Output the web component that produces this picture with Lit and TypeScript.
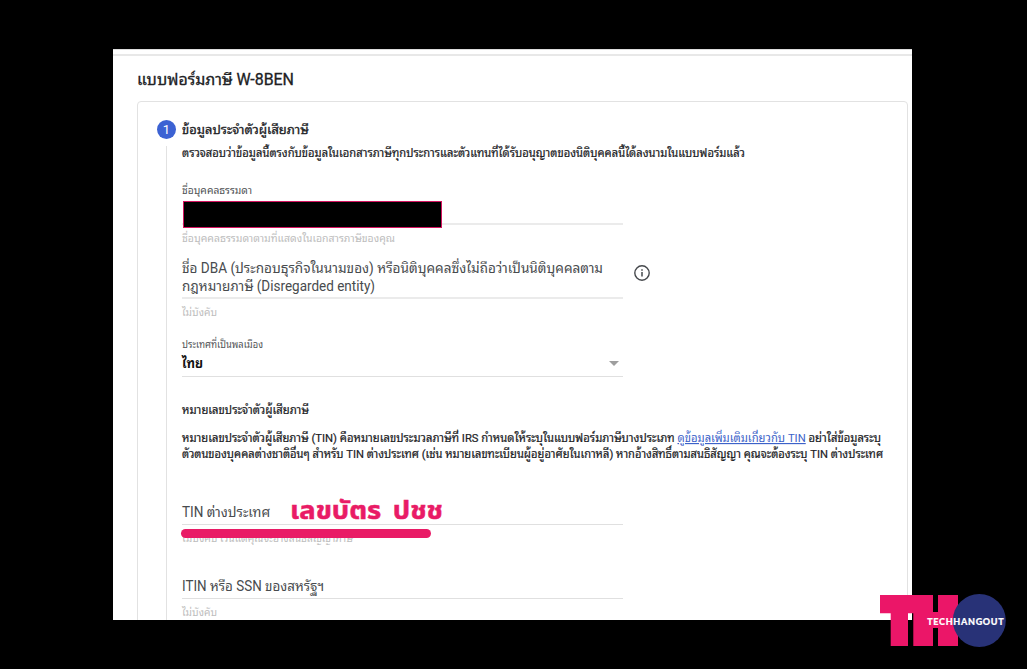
import { LitElement, html, css } from "lit";
import { customElement, property } from "lit/decorators.js";

@customElement("form-line")
export class FormLine extends LitElement {
  static styles = css`
    :host {
      display: block;
    }

    svg {
      display: block;
      overflow: visible;
    }

    text {
      fill: currentColor;
      white-space: pre;
    }

    .link {
      fill: #3c62c9;
      stroke: none;
      text-decoration: underline;
    }
  `;

  @property() text = "";
  @property() link = "";
  @property() after = "";
  @property({ type: Number }) width = 100;
  @property({ type: Number }) height = 18;

  render() {
    const base = this.height - 5;
    return html`
      <svg width=${this.width} height=${this.height}>
        <text x="0" y=${base} textLength=${this.width} lengthAdjust="spacingAndGlyphs">${this.text}<tspan class="link">${this.link}</tspan>${this.after}</text>
      </svg>
    `;
  }
}

@customElement("tech-logo")
export class TechLogo extends LitElement {
  static styles = css`
    :host {
      display: block;
      width: 127px;
      height: 54px;
    }

    svg {
      display: block;
    }

    text {
      font: 900 9px Lato, sans-serif;
      fill: #fff;
      stroke: #fff;
      stroke-width: 0.2px;
    }
  `;

  render() {
    return html`
      <svg width="127" height="54" viewBox="0 0 127 54">
        <path
          d="M0 2H53V19H58V2H78V53H58V35H53V53H33.3V20.3H28V53H10.7V20.3H0Z"
          fill="#eb1668"
        />
        <circle cx="99.3" cy="27.4" r="26.5" fill="#283277" />
        <text x="47.2" y="31.5" textLength="76.5">TECHHANGOUT</text>
      </svg>
    `;
  }
}

@customElement("app-root")
export class AppRoot extends LitElement {
  static styles = css`
    :host {
      display: block;
      position: relative;
      box-sizing: border-box;
      width: 1027px;
      height: 669px;
      padding: 49px 115px 49px 113px;
      background: #000;
      overflow: hidden;
      font-family: Roboto, "Noto Sans Thai Looped", "Noto Looped Thai", Loma, Waree, Garuda, "Noto Sans Thai", sans-serif;
      color: #202124;
    }

    .sheet {
      box-sizing: border-box;
      height: 571px;
      background: #fff;
      border-top: 1px solid #ddd;
      overflow: hidden;
    }

    .rule {
      height: 2px;
      margin-top: 4px;
      background: #e8e8e8;
    }

    .title {
      margin: 15px 0 0 24px;
      font-size: 16px;
      stroke: #202124;
      stroke-width: 0.3px;
    }

    .card {
      box-sizing: border-box;
      width: 771px;
      height: 540px;
      margin: 11px 0 0 24px;
      padding: 18px 0 0 19px;
      border: 1px solid #e2e2e2;
      border-radius: 4px;
    }

    .step {
      display: flex;
      align-items: center;
      gap: 6px;
      height: 19px;
    }

    .number {
      width: 19px;
      height: 19px;
      border-radius: 50%;
      background: #3c62d3;
      color: #fff;
      font-size: 13px;
      line-height: 19px;
      text-align: center;
    }

    .heading {
      font-size: 13px;
      stroke: #202124;
      stroke-width: 0.3px;
    }

    .body {
      display: flex;
      flex-direction: column;
      margin: 7px 0 0 9px;
      padding-left: 15px;
      height: 480px;
      border-left: 1px solid #e2e2e2;
    }

    .note {
      font-size: 11.5px;
      stroke: #202124;
      stroke-width: 0.2px;
    }

    .label {
      font-size: 10.5px;
      color: #505356;
    }

    .hint {
      font-size: 10.5px;
      color: #bdbdbd;
    }

    .placeholder {
      font-size: 13.8px;
      color: #484b4e;
    }

    .field {
      box-sizing: border-box;
      width: 441px;
      border-bottom: 1px solid #e0e0e0;
    }

    .name {
      height: 25px;
      margin-top: 1px;
      border-bottom-width: 2px;
      border-color: #ebebeb;
    }

    .redacted {
      box-sizing: border-box;
      width: 259px;
      height: 27px;
      margin: 1px 0 0 1px;
      position: relative;
      background: #000;
      border: 1px solid #d4145f;
    }

    .dba-row {
      display: flex;
      gap: 10px;
      margin-top: 13px;
      height: 39px;
    }

    .dba {
      height: 39px;
      border-bottom-width: 2px;
      border-color: #ebebeb;
    }

    .info {
      margin-top: 4px;
    }

    .country {
      display: flex;
      align-items: center;
      justify-content: space-between;
      height: 24px;
      padding-bottom: 2px;
    }

    .value {
      font-size: 13.4px;
      font-weight: 700;
      color: #111;
    }

    .arrow {
      margin-right: 4px;
      border: 5px solid transparent;
      border-top-color: #9e9e9e;
      border-bottom: 0;
    }

    .tin {
      display: flex;
      gap: 20px;
      height: 31px;
      margin-top: 31px;
    }

    .tin .placeholder {
      margin-top: 10px;
    }

    .answer {
      margin-top: 3px;
      font-family: "Noto Sans Thai", "Open Sans", sans-serif;
      font-size: 25px;
      font-weight: 700;
      word-spacing: 4px;
      color: #e91b66;
      stroke: #e91b66;
      stroke-width: 0.5px;
    }

    .marker {
      position: absolute;
      left: 181px;
      top: 529px;
      width: 250px;
      height: 9px;
      border-radius: 5px;
      background: #e91b66;
    }

    .logo {
      position: absolute;
      left: 880px;
      top: 593px;
    }

    .name-label {
      margin-top: 21px;
    }

    .below {
      margin-top: 6px;
    }

    .country-label {
      margin-top: 16px;
    }

    .tin-title {
      margin-top: 26px;
    }

    .tin-text {
      margin-top: 12px;
    }

    .itin {
      margin-top: 31px;
      padding-bottom: 2px;
    }
  `;

  render() {
    return html`
      <div class="sheet">
        <div class="rule"></div>
        <form-line class="title" text="แบบฟอร์มภาษี W-8BEN" width="157" height="19"></form-line>
        <div class="card">
          <div class="step">
            <div class="number">1</div>
            <form-line class="heading" text="ข้อมูลประจำตัวผู้เสียภาษี" width="127" height="18"></form-line>
          </div>
          <div class="body">
            <form-line
              class="note"
              text="ตรวจสอบว่าข้อมูลนี้ตรงกับข้อมูลในเอกสารภาษีทุกประการและตัวแทนที่ได้รับอนุญาตของนิติบุคคลนี้ได้ลงนามในแบบฟอร์มแล้ว"
              width="563"
              height="16"
            ></form-line>
            <form-line class="label name-label" text="ชื่อบุคคลธรรมดา" width="70" height="16"></form-line>
            <div class="field name"><div class="redacted"></div></div>
            <form-line class="hint below" text="ชื่อบุคคลธรรมดาตามที่แสดงในเอกสารภาษีของคุณ" width="213" height="16"></form-line>
            <div class="dba-row">
              <div class="field dba">
                <form-line class="placeholder" text="ชื่อ DBA (ประกอบธุรกิจในนามของ) หรือนิติบุคคลซึ่งไม่ถือว่าเป็นนิติบุคคลตาม" width="421" height="18"></form-line>
                <form-line class="placeholder" text="กฎหมายภาษี (Disregarded entity)" width="193" height="18"></form-line>
              </div>
              <svg class="info" width="18" height="18" viewBox="0 0 18 18">
                <circle cx="9" cy="9" r="7.2" fill="none" stroke="#46494d" stroke-width="1.4" />
                <path d="M9 8V12.5M9 5.2V6.7" stroke="#46494d" stroke-width="1.5" />
              </svg>
            </div>
            <form-line class="hint below" text="ไม่บังคับ" width="35" height="16"></form-line>
            <form-line class="label country-label" text="ประเทศที่เป็นพลเมือง" width="81" height="16"></form-line>
            <div class="field country">
              <form-line class="value" text="ไทย" width="21" height="18"></form-line>
              <div class="arrow"></div>
            </div>
            <form-line class="note tin-title" text="หมายเลขประจำตัวผู้เสียภาษี" width="127" height="16"></form-line>
            <form-line
              class="note tin-text"
              text="หมายเลขประจำตัวผู้เสียภาษี (TIN) คือหมายเลขประมวลภาษีที่ IRS กำหนดให้ระบุในแบบฟอร์มภาษีบางประเภท "
              link="ดูข้อมูลเพิ่มเติมเกี่ยวกับ TIN"
              after=" อย่าใส่ข้อมูลระบุ"
              width="699"
              height="16"
            ></form-line>
            <form-line
              class="note"
              text="ตัวตนของบุคคลต่างชาติอื่นๆ สำหรับ TIN ต่างประเทศ (เช่น หมายเลขทะเบียนผู้อยู่อาศัยในเกาหลี) หากอ้างสิทธิ์ตามสนธิสัญญา คุณจะต้องระบุ TIN ต่างประเทศ"
              width="701"
              height="16"
            ></form-line>
            <div class="field tin">
              <form-line class="placeholder" text="TIN ต่างประเทศ" width="88" height="18"></form-line>
              <form-line class="answer" text="เลขบัตร ปชช" width="153" height="27"></form-line>
            </div>
            <form-line class="hint below" text="ไม่บังคับ เว้นแต่คุณจะอ้างสนธิสัญญาภาษี" width="171" height="16"></form-line>
            <div class="field itin">
              <form-line class="placeholder" text="ITIN หรือ SSN ของสหรัฐฯ" width="142" height="18"></form-line>
            </div>
            <form-line class="hint below" text="ไม่บังคับ" width="35" height="16"></form-line>
          </div>
        </div>
      </div>
      <div class="marker"></div>
      <tech-logo class="logo"></tech-logo>
    `;
  }
}
